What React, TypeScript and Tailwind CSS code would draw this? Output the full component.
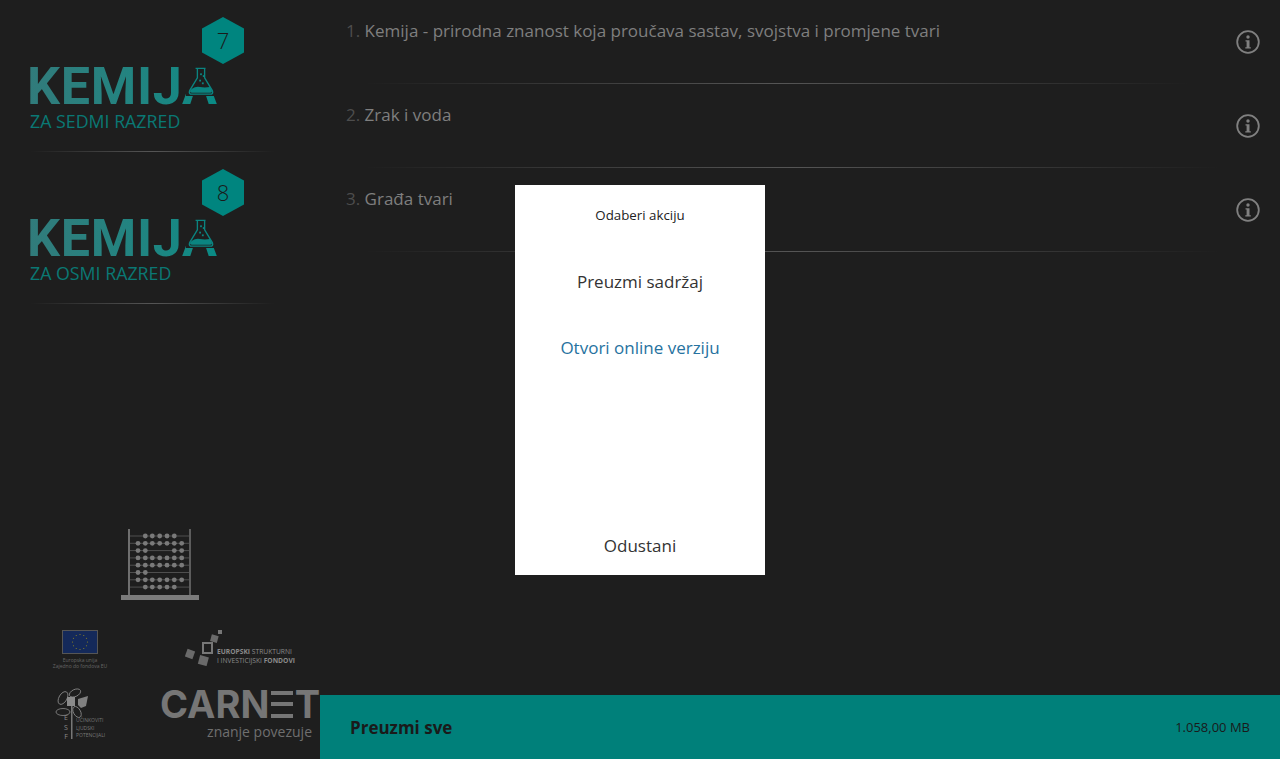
const font = "font-['Open_Sans','Noto_Sans',sans-serif]";

const lessons = [
  { num: '1.', title: 'Kemija - prirodna znanost koja proučava sastav, svojstva i promjene tvari', lineTo: 'mr-[90px]' },
  { num: '2.', title: 'Zrak i voda', lineTo: 'mr-[60px]' },
  { num: '3.', title: 'Građa tvari', lineTo: 'mr-[60px]' },
];

const courses = [
  { grade: '7', subtitle: 'ZA SEDMI RAZRED' },
  { grade: '8', subtitle: 'ZA OSMI RAZRED' },
];

function Flask() {
  return (
    <svg viewBox="0 0 30 32" className="absolute left-[156px] top-[67px] h-[29px] w-[30px] bg-[#1e1e1e]">
      <path d="M9 1.500h11M11 2v10L2.500 26q-1.500 4 2.500 4h20q4 0 2.500-4L19 12V2" fill="none" stroke="#0b8480" strokeWidth="1.500" />
      <path d="M5 24q4-3 9-2t11 0l2 4q.500 2.500-2 2.500H5q-2.500 0-2-2.500z" fill="#0b8480" />
      <rect x="14" y="7" width="2" height="2" fill="#0b8480" />
      <rect x="17" y="9" width="2" height="2" fill="#0b8480" />
      <rect x="13" y="14" width="2" height="2" fill="#0b8480" />
      <rect x="16" y="17" width="2" height="2" fill="#0b8480" />
    </svg>
  );
}

function CourseLogo({ grade, subtitle }: { grade: string; subtitle: string }) {
  return (
    <div className="h-[152px] shrink-0">
      <div className="relative ml-[30px] h-[151px] w-[220px] pt-[65px]">
        <svg viewBox="0 0 42 47" className="absolute left-[172px] top-[17px] h-[47px] w-[42px]">
          <path d="M21 0 42 11.500V35.500L21 47 0 35.500V11.500Z" fill="#00857f" />
        </svg>
        <span className="absolute left-[172px] top-[17px] flex h-[47px] w-[42px] items-center justify-center text-[22px] font-light text-[#1a1a1a]">{grade}</span>
        <div className="ml-[-3px] h-[44px] w-[192px] whitespace-nowrap bg-gradient-to-r from-[#317b7b] to-[#078b85] bg-clip-text font-['Roboto',sans-serif] text-[52px] font-bold leading-[44px] tracking-[0.700px] text-transparent">KEMIJA</div>
        <Flask />
        <div className="mt-[1px] text-[17.800px] leading-[22px] text-[#0a7874]">{subtitle}</div>
      </div>
      <div className="ml-[30px] mr-[45px] h-px bg-gradient-to-r from-transparent via-[#555555] to-transparent" />
    </div>
  );
}

function Abacus() {
  const cols = [138, 145.3, 152.3, 159.7, 167, 174.3, 181.7];
  const rows = [
    [1, 2, 3, 4, 5],
    [0, 1, 2, 3, 4, 5, 6],
    [0, 1, 5, 6],
    [0, 1, 2, 3, 4, 5, 6],
    [0, 1, 2, 3, 4, 5, 6],
    [0, 1],
    [0, 1, 2, 3, 4, 5, 6],
    [1, 2, 3, 4, 5],
  ];
  return (
    <svg viewBox="120 528 80 73" className="h-[73px] w-[80px]">
      <rect x="128" y="529" width="2" height="67" fill="#6f6f6f" />
      <rect x="189" y="529" width="2" height="67" fill="#5c5c5c" />
      <rect x="121" y="595" width="78" height="5" fill="#7b7b7b" />
      {rows.map((beads, r) => {
        const y = 536 + r * 7.3;
        return (
          <g key={r}>
            <rect x="130" y={y - 0.5} width="59" height="1" fill="#4f4f4f" />
            {beads.map(c => <circle key={c} cx={cols[c]} cy={y} r="2.400" fill="#7a7a7a" />)}
          </g>
        );
      })}
    </svg>
  );
}

function EuFlag() {
  const stars = Array.from({ length: 12 }, (_, i) => i * Math.PI / 6);
  return (
    <div className="flex w-[60px] flex-col items-center">
      <svg viewBox="0 0 36 24" className="h-[24px] w-[36px]">
        <rect x="0.500" y="0.500" width="35" height="23" fill="#14295a" stroke="#555555" />
        {stars.map(a => <circle key={a} cx={18 + 7.500 * Math.cos(a)} cy={12 + 7.500 * Math.sin(a)} r="0.600" fill="#8d8422" />)}
      </svg>
      <div className="mt-[3px] whitespace-nowrap text-center text-[5px] leading-[6px] text-[#666666]">
        Europska unija<br />Zajedno do fondova EU
      </div>
    </div>
  );
}

function EsifLogo() {
  return (
    <div className="flex items-center">
      <svg viewBox="0 0 38 36" className="h-[36px] w-[38px]">
        <rect x="1" y="20" width="8" height="8" fill="#6a6a6a" transform="rotate(20 5 24)" />
        <rect x="18" y="13" width="9" height="10" fill="none" stroke="#777777" strokeWidth="2" />
        <rect x="14" y="26" width="9" height="9" fill="#6a6a6a" transform="rotate(15 18 30)" />
        <rect x="26" y="5" width="7" height="7" fill="#6a6a6a" transform="rotate(15 29 8)" />
        <rect x="33" y="0" width="4" height="4" fill="#777777" />
      </svg>
      <div className="ml-[-6px] mt-[16px] whitespace-nowrap text-[6.700px] leading-[9px] text-[#8a8a8a]">
        <b>EUROPSKI</b> STRUKTURNI<br />I INVESTICIJSKI <b>FONDOVI</b>
      </div>
    </div>
  );
}

function EsfLogo() {
  return (
    <div className="relative h-[58px] w-[54px]">
      <svg viewBox="0 0 54 58" className="h-[58px] w-[54px]">
        <g fill="none" stroke="#8a8a8a" strokeWidth="0.800">
          <ellipse cx="11" cy="12" rx="4" ry="7" transform="rotate(30 11 12)" />
          <ellipse cx="23" cy="7" rx="6" ry="3.500" transform="rotate(-25 23 7)" />
          <ellipse cx="11" cy="26" rx="7" ry="3.500" />
          <ellipse cx="25" cy="26" rx="3.500" ry="6" transform="rotate(-30 25 26)" />
        </g>
        <rect x="15" y="11" width="8" height="9" fill="#8a8a8a" />
        <path d="M26 13l10-3-2 10-5 2-3-3z" fill="#808080" />
        <rect x="19" y="20" width="1.500" height="33" fill="#777777" />
      </svg>
      <div className="absolute left-[12px] top-[27px] text-center text-[7px] leading-[9.500px] text-[#8a8a8a]">E<br />S<br />F</div>
      <div className="absolute left-[24px] top-[31px] whitespace-nowrap text-[5px] leading-[7.500px] text-[#777777]">UČINKOVITI<br />LJUDSKI<br />POTENCIJALI</div>
    </div>
  );
}

function CarnetLogo() {
  return (
    <div className="mt-[1px] w-[160px]">
      <div className="flex h-[34px] items-center font-['Inter',sans-serif] text-[38px] font-bold leading-[34px] text-[#767676]">
        <span>CARN</span>
        <span className="mx-[2px] flex h-[27px] w-[22px] flex-col justify-between">
          <i className="block h-[4px] bg-[#767676]" />
          <i className="block h-[4px] bg-[#767676]" />
          <i className="block h-[4px] bg-[#767676]" />
        </span>
        <span>T</span>
      </div>
      <div className="mr-[8px] mt-[1px] text-right text-[14px] leading-[20px] text-[#6f6f6f]">znanje povezuje</div>
    </div>
  );
}

function InfoIcon() {
  return (
    <svg viewBox="0 0 24 24" className="h-[24px] w-[24px]">
      <circle cx="12" cy="12" r="10.800" fill="none" stroke="#808080" strokeWidth="1.800" />
      <circle cx="12" cy="7" r="1.700" fill="#808080" />
      <path d="M9.500 10.200h4v7h1.300v1.300H9.300v-1.300h1.300v-5.700H9.500z" fill="#808080" />
    </svg>
  );
}

export default function App() {
  return (
    <div className={`relative flex h-[759px] w-[1280px] overflow-hidden bg-[#1e1e1e] ${font}`}>
      <aside className="flex w-[320px] shrink-0 flex-col">
        {courses.map(c => <CourseLogo key={c.grade} grade={c.grade} subtitle={c.subtitle} />)}
        <div className="mt-auto flex flex-col pb-[15px]">
          <div className="flex justify-center"><Abacus /></div>
          <div className="mt-[29px] flex items-start pl-[50px]">
            <EuFlag />
            <div className="ml-[75px]"><EsifLogo /></div>
          </div>
          <div className="mt-[17px] flex items-start pl-[52px]">
            <EsfLogo />
            <div className="ml-[54px]"><CarnetLogo /></div>
          </div>
        </div>
      </aside>

      <main className="flex flex-1 flex-col">
        <div className="flex-1">
          {lessons.map(l => (
            <div key={l.num} className="h-[84px]">
              <div className="flex h-[83px] items-start pl-[26px] pr-[20px]">
                <div className="flex-1 pt-[18px] text-[17px] leading-[26px] text-[#7f7f7f]">
                  <span className="text-[#4d4d4d]">{l.num}</span> {l.title}
                </div>
                <div className="pt-[30px]"><InfoIcon /></div>
              </div>
              <div className={`ml-[44px] h-px bg-gradient-to-r from-transparent via-[#555555] to-transparent ${l.lineTo}`} />
            </div>
          ))}
        </div>
        <div className="flex h-[64px] items-center justify-between bg-[#00807a] px-[30px] pt-[1px] text-[#1a1a1a]">
          <span className="text-[17px] font-bold">Preuzmi sve</span>
          <span className="text-[13px]">1.058,00 MB</span>
        </div>
      </main>

      <div className="absolute left-[515px] top-[185px] flex h-[390px] w-[250px] flex-col items-center bg-white">
        <div className="mt-[20px] text-[13.300px] leading-[20px] text-[#222222]">Odaberi akciju</div>
        <div className="mt-[43px] text-[17px] leading-[28px] text-[#333333]">Preuzmi sadržaj</div>
        <div className="mt-[38px] text-[17px] leading-[28px] text-[#2672a0]">Otvori online verziju</div>
        <div className="mb-[15px] mt-auto text-[17px] leading-[28px] text-[#333333]">Odustani</div>
      </div>
    </div>
  );
}
